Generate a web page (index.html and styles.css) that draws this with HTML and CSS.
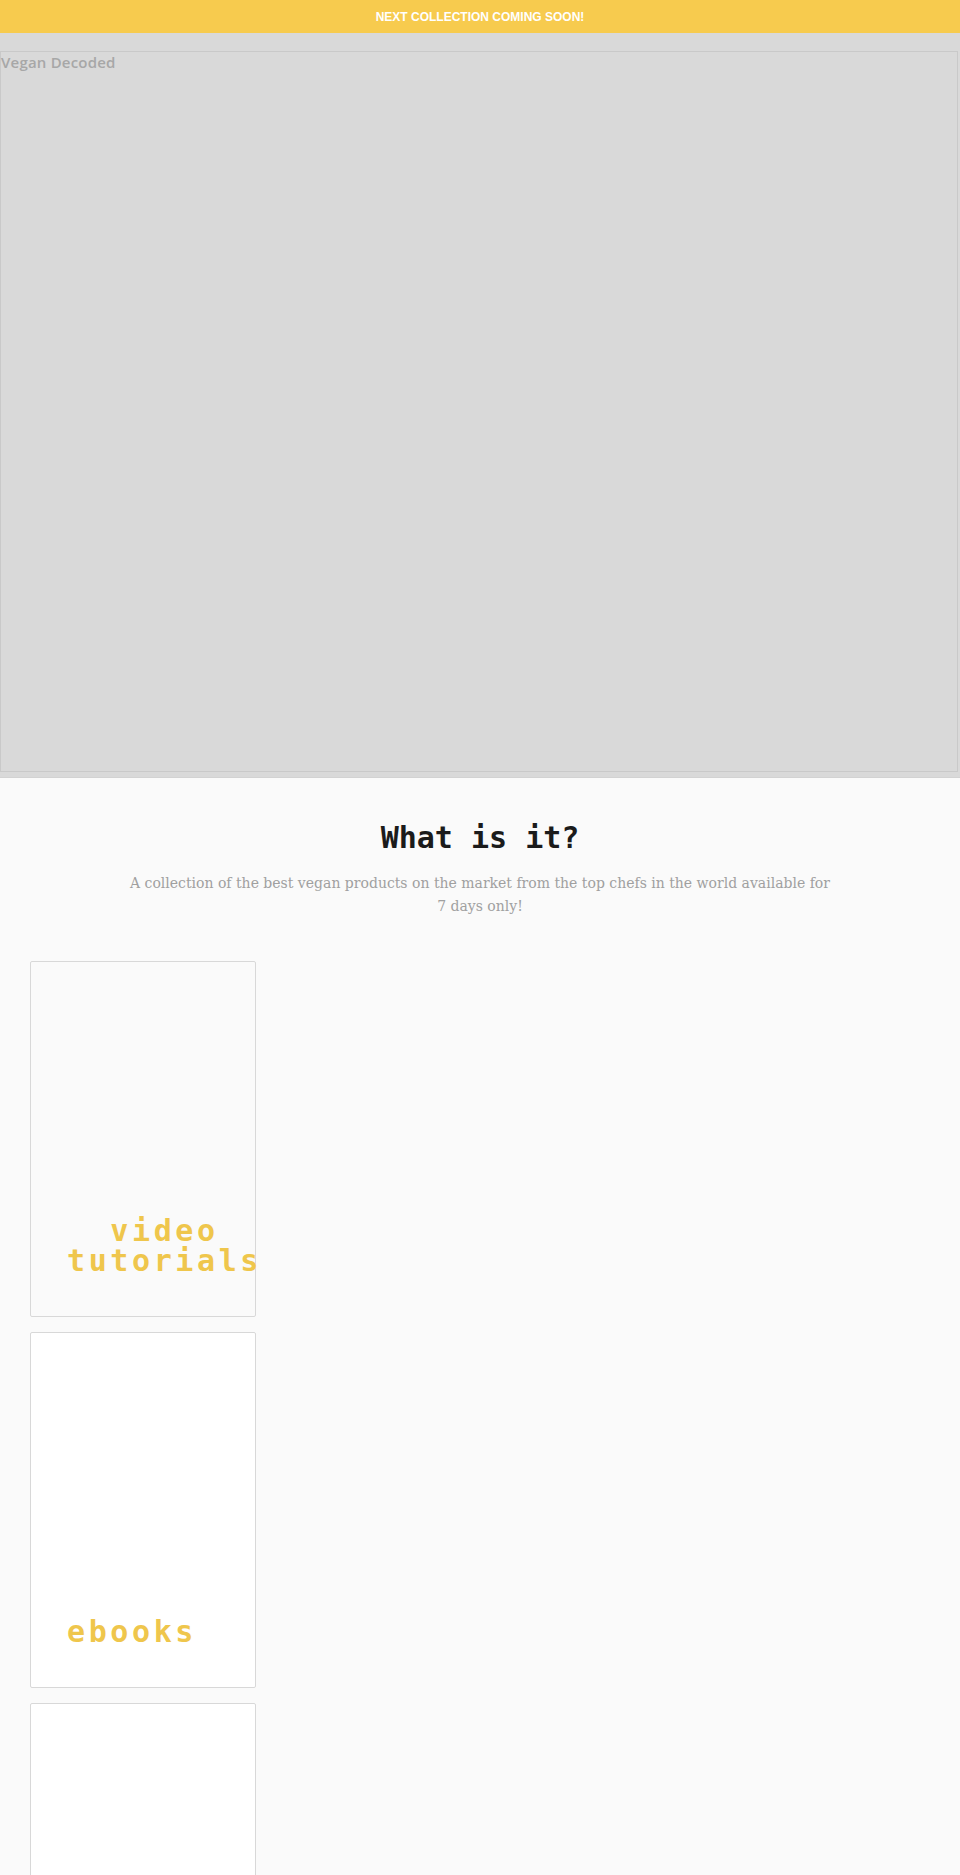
FILE: index.html
```html
<!DOCTYPE html>
<html lang="en">
<head>
<meta charset="utf-8">
<title>Vegan Decoded</title>
<link rel="stylesheet" href="styles.css">
</head>
<body>
  <div class="announce">NEXT COLLECTION COMING SOON!</div>
  <header class="hero">
    <div class="hero-frame">
      <span class="brand">Vegan Decoded</span>
    </div>
  </header>
  <main class="about">
    <h2 class="about-title">What is it?</h2>
    <p class="about-text">A collection of the best vegan products on the market from the top chefs in the world available for 7 days only!</p>
    <div class="cards">
      <div class="card card-plain">
        <span class="card-label">video<br>tutorials</span>
      </div>
      <div class="card">
        <span class="card-label">ebooks</span>
      </div>
      <div class="card">
        <span class="card-label"></span>
      </div>
    </div>
  </main>
</body>
</html>
```

FILE: styles.css
```css
* { box-sizing: border-box; }

html, body {
  margin: 0;
  padding: 0;
}

body {
  background: #fafafa;
  font-family: "Liberation Sans", Arial, sans-serif;
}

.announce {
  height: 33px;
  background: #f7cb4e;
  color: #ffffff;
  font-family: "Liberation Sans", Arial, sans-serif;
  font-size: 12px;
  font-weight: bold;
  line-height: 34px;
  text-align: center;
}

.hero {
  background: #d9d9d9;
  padding: 18px 0 5px;
  border-bottom: 1px solid #d2d2d2;
}

.hero-frame {
  width: 958px;
  height: 721px;
  border: 1px solid #c9c9c9;
}

.brand {
  display: block;
  font-family: "Open Sans", "Noto Sans", sans-serif;
  font-weight: 600;
  font-size: 15px;
  letter-spacing: 0.2px;
  color: #a7a7a7;
  line-height: 20px;
}

.about {
  padding-top: 42px;
}

.about-title {
  margin: 0;
  text-align: center;
  font-family: "DejaVu Sans Mono", monospace;
  font-weight: bold;
  font-size: 30px;
  line-height: 36px;
  color: #1b1b1b;
}

.about-text {
  max-width: 705px;
  margin: 16px auto 0;
  text-align: center;
  font-family: "DejaVu Serif", serif;
  font-size: 14px;
  line-height: 22.5px;
  color: #a0a0a0;
}

.cards {
  display: flex;
  flex-direction: column;
  align-items: flex-start;
  gap: 15px;
  padding: 44px 0 0 30px;
}

.card {
  width: 226px;
  height: 356px;
  border: 1px solid #d8d8d8;
  border-radius: 2px;
  background: #ffffff;
  display: flex;
  flex-direction: column;
  justify-content: flex-end;
  align-items: flex-start;
  padding: 0 0 40px 36px;
}

.card-plain {
  background: #fafafa;
}

.card-label {
  display: block;
  white-space: nowrap;
  text-align: center;
  font-family: "DejaVu Sans Mono", monospace;
  font-weight: bold;
  font-size: 30px;
  line-height: 30px;
  letter-spacing: 3.6px;
  color: #efc64c;
}
```
